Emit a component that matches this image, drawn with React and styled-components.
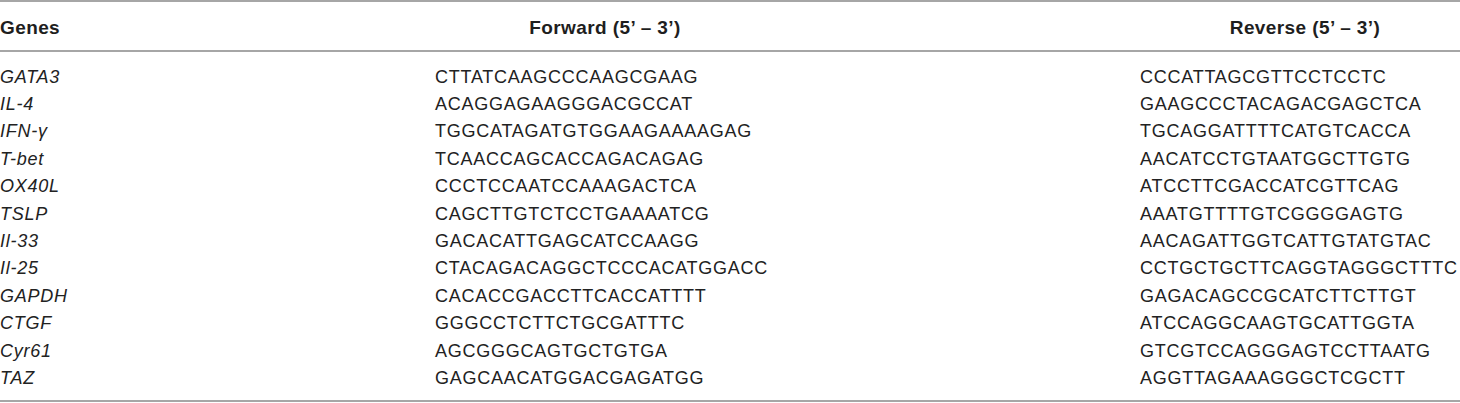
import styled, { createGlobalStyle } from "styled-components";

const GlobalStyle = createGlobalStyle`
    html, body {
        margin: 0;
        padding: 0;
        background: #fff;
    }
    body {
        font-family: "Liberation Sans", Arial, Helvetica, sans-serif;
        color: #222;
    }
`;

const primers = [
    { gene: "GATA3", fwd: "CTTATCAAGCCCAAGCGAAG", rev: "CCCATTAGCGTTCCTCCTC" },
    { gene: "IL-4", fwd: "ACAGGAGAAGGGACGCCAT", rev: "GAAGCCCTACAGACGAGCTCA" },
    { gene: "IFN-γ", fwd: "TGGCATAGATGTGGAAGAAAAGAG", rev: "TGCAGGATTTTCATGTCACCA" },
    { gene: "T-bet", fwd: "TCAACCAGCACCAGACAGAG", rev: "AACATCCTGTAATGGCTTGTG" },
    { gene: "OX40L", fwd: "CCCTCCAATCCAAAGACTCA", rev: "ATCCTTCGACCATCGTTCAG" },
    { gene: "TSLP", fwd: "CAGCTTGTCTCCTGAAAATCG", rev: "AAATGTTTTGTCGGGGAGTG" },
    { gene: "Il-33", fwd: "GACACATTGAGCATCCAAGG", rev: "AACAGATTGGTCATTGTATGTAC" },
    { gene: "Il-25", fwd: "CTACAGACAGGCTCCCACATGGACC", rev: "CCTGCTGCTTCAGGTAGGGCTTTC" },
    { gene: "GAPDH", fwd: "CACACCGACCTTCACCATTTT", rev: "GAGACAGCCGCATCTTCTTGT" },
    { gene: "CTGF", fwd: "GGGCCTCTTCTGCGATTTC", rev: "ATCCAGGCAAGTGCATTGGTA" },
    { gene: "Cyr61", fwd: "AGCGGGCAGTGCTGTGA", rev: "GTCGTCCAGGGAGTCCTTAATG" },
    { gene: "TAZ", fwd: "GAGCAACATGGACGAGATGG", rev: "AGGTTAGAAAGGGCTCGCTT" },
];

const Table = styled.div`
    width: 1460px;
    border-top: 2px solid #a6a6a6;
    border-bottom: 2px solid #a6a6a6;
`;

const Row = styled.div`
    display: grid;
    grid-template-columns: 435px 340px 365px 1fr;
    align-items: center;
`;

const HeadRow = styled(Row)`
    height: 45px;
    padding-top: 3px;
    border-bottom: 2px solid #a6a6a6;
`;

const Body = styled.div`
    padding: 11.6px 0 7.6px;
`;

const HeadCell = styled.div`
    grid-column: ${(p) => p.$col};
    font-size: 19px;
    font-weight: bold;
    letter-spacing: 0.4px;
    line-height: 45px;
    color: #1e1e1e;
    text-align: ${(p) => (p.$center ? "center" : "left")};
    padding-left: ${(p) => p.$pad || 0}px;
    white-space: nowrap;
`;

const Cell = styled.div`
    grid-column: ${(p) => p.$col};
    font-size: 18px;
    line-height: 27.4px;
    letter-spacing: 0.75px;
    font-style: ${(p) => (p.$italic ? "italic" : "normal")};
    white-space: nowrap;
`;

export default function App() {
    return (
        <>
            <GlobalStyle />
            <Table>
                <HeadRow>
                    <HeadCell $col={1}>Genes</HeadCell>
                    <HeadCell $col={2} $center>Forward (5’ – 3’)</HeadCell>
                    <HeadCell $col={4} $center $pad={10}>Reverse (5’ – 3’)</HeadCell>
                </HeadRow>
                <Body>
                    {primers.map((p) => (
                        <Row key={p.gene}>
                            <Cell $col={1} $italic>{p.gene}</Cell>
                            <Cell $col={2}>{p.fwd}</Cell>
                            <Cell $col={4}>{p.rev}</Cell>
                        </Row>
                    ))}
                </Body>
            </Table>
        </>
    );
}
